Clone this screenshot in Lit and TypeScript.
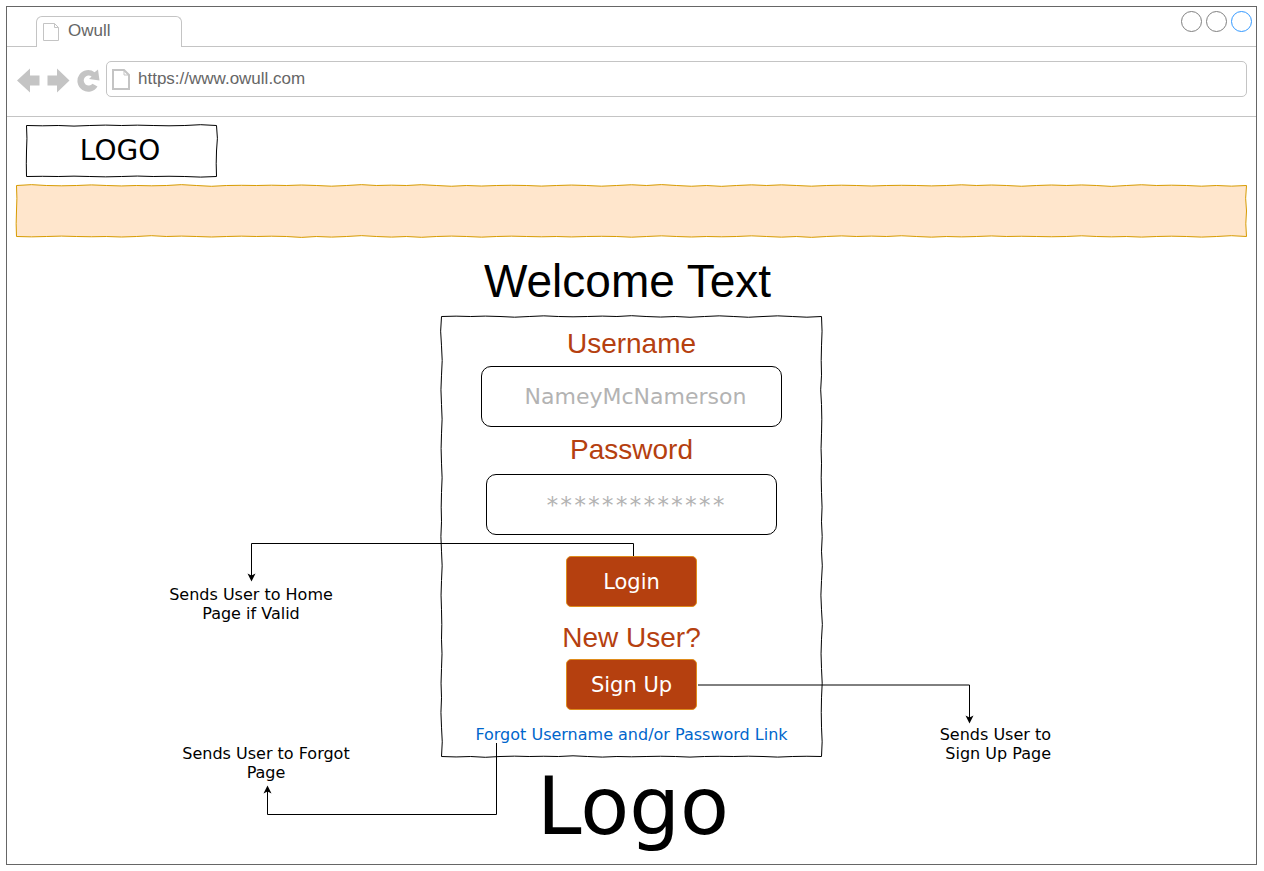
import { LitElement, html, css, svg } from "lit";
import { customElement, property } from "lit/decorators.js";

/** Builds a closed hand-drawn outline for a box of the given size. */
function sketchPath(w: number, h: number, seed: number): string {
  let state = seed * 7919;
  const random = () => {
    state = (state * 16807) % 2147483647;
    return state / 2147483647;
  };
  const corners = [
    [0, 0],
    [w, 0],
    [w, h],
    [0, h],
    [0, 0],
  ];
  let d = "M0 0";
  for (let i = 0; i < 4; i++) {
    const [x0, y0] = corners[i];
    const [x1, y1] = corners[i + 1];
    const length = Math.abs(x1 - x0) + Math.abs(y1 - y0);
    const steps = Math.max(2, Math.round(length / 30));
    const horizontal = y0 === y1;
    let side = random() > 0.5 ? 1 : -1;
    for (let s = 1; s <= steps; s++) {
      const mid = (s - 0.5) / steps;
      const end = s / steps;
      const bend = side * (0.4 + random() * 1.4);
      const cx = x0 + (x1 - x0) * mid + (horizontal ? 0 : bend);
      const cy = y0 + (y1 - y0) * mid + (horizontal ? bend : 0);
      const ex = x0 + (x1 - x0) * end;
      const ey = y0 + (y1 - y0) * end;
      d += `Q${cx.toFixed(1)} ${cy.toFixed(1)} ${ex.toFixed(1)} ${ey.toFixed(1)}`;
      if (random() > 0.3) side = -side;
    }
  }
  return d + "Z";
}

@customElement("sketch-box")
class SketchBox extends LitElement {
  @property({ type: Number }) w = 100;
  @property({ type: Number }) h = 50;
  @property({ type: Number }) seed = 7;

  static styles = css`
    :host {
      display: block;
      position: relative;
    }
    .outline {
      position: absolute;
      inset: 0;
      width: 100%;
      height: 100%;
      overflow: visible;
      pointer-events: none;
    }
    .stroke {
      fill: var(--sketch-fill, none);
      stroke: var(--sketch-stroke, #000);
      stroke-width: 1;
      vector-effect: non-scaling-stroke;
    }
    .content {
      position: relative;
    }
  `;

  render() {
    return html`
      <svg class="outline" viewBox="-0.5 -0.5 ${this.w} ${this.h}" preserveAspectRatio="none" aria-hidden="true">
        <path class="stroke" d=${sketchPath(this.w - 1, this.h - 1, this.seed)}></path>
      </svg>
      <div class="content"><slot></slot></div>
    `;
  }
}

@customElement("browser-chrome")
class BrowserChrome extends LitElement {
  static styles = css`
    :host {
      display: block;
      font-family: "Liberation Sans", Arial, sans-serif;
      font-size: 17px;
      color: #666;
    }
    .tabs {
      display: flex;
      justify-content: space-between;
      align-items: flex-end;
      height: 40px;
      box-shadow: inset 0 -1px #c4c4c4;
    }
    .tab {
      display: flex;
      align-items: center;
      gap: 8px;
      box-sizing: border-box;
      width: 146px;
      height: 31px;
      margin-left: 29px;
      padding: 0 6px 3px;
      border: 1px solid #c4c4c4;
      border-bottom: 0;
      border-radius: 6px 6px 0 0;
      background: #fff;
      font: inherit;
      color: inherit;
    }
    .tab .page-icon {
      margin-top: 3px;
    }
    .window-buttons {
      display: flex;
      gap: 4px;
      align-self: flex-start;
      padding: 4px 4px 0 0;
    }
    .dot {
      box-sizing: border-box;
      width: 21px;
      height: 21px;
      padding: 0;
      border: 1px solid #808080;
      border-radius: 50%;
      background: #fff;
    }
    .dot.active {
      border-color: #3399ff;
    }
    .toolbar {
      display: flex;
      align-items: center;
      padding: 14px 9px 19px 10px;
      border-bottom: 1px solid #c4c4c4;
    }
    .nav {
      display: flex;
      gap: 7px;
      padding: 2px 6px 0 0;
    }
    .nav-button {
      display: block;
      padding: 0;
      border: 0;
      background: none;
    }
    .nav-icon {
      display: block;
      fill: #c4c4c4;
    }
    .address {
      display: flex;
      flex: 1;
      align-items: center;
      gap: 8px;
      box-sizing: border-box;
      height: 36px;
      padding: 0 5px;
      border: 1px solid #c4c4c4;
      border-radius: 5px;
    }
    .url {
      flex: 1;
      min-width: 0;
      padding: 0 0 2px;
      border: 0;
      outline: 0;
      background: none;
      font: inherit;
      color: inherit;
    }
    .page-icon {
      fill: none;
      stroke: #c4c4c4;
    }
  `;

  render() {
    return html`
      <div class="tabs">
        <button class="tab">
          <svg class="page-icon" width="17" height="20" viewBox="0 0 17 20" aria-hidden="true">
            <path d="M.5 1.5H11.5L15.5 5.5V18.5H.5ZM11.5 1.5V5.5H15.5"></path>
          </svg>
          Owull
        </button>
        <div class="window-buttons">
          <button class="dot" aria-label="Minimize"></button>
          <button class="dot" aria-label="Maximize"></button>
          <button class="dot active" aria-label="Close"></button>
        </div>
      </div>
      <div class="toolbar">
        <div class="nav">
          <button class="nav-button" aria-label="Back">
            <svg class="nav-icon" width="23" height="25" viewBox="0 0 23 25">
              <path d="M0 12.5 13 0.5V7.5H22.5V17.5H13V24.5Z"></path>
            </svg>
          </button>
          <button class="nav-button" aria-label="Forward">
            <svg class="nav-icon" width="23" height="25" viewBox="0 0 23 25">
              <path d="M22.5 12.5 10 0.5V7.5H0.5V17.5H10V24.5Z"></path>
            </svg>
          </button>
          <button class="nav-button" aria-label="Reload">
            <svg class="nav-icon" width="23" height="25" viewBox="0 0 23 25">
              <path d="M20.5 18.5A10.8 10.8 0 1 1 17.6 4.2L21 1.5 22.5 12.5 12 11 14.6 8.4A5 5 0 1 0 15.5 15.8Z"></path>
            </svg>
          </button>
        </div>
        <div class="address">
          <svg class="page-icon" width="18" height="21" viewBox="0 0 18 21" stroke-width="2" aria-hidden="true">
            <path d="M1 1H12L17 6V20H1Z"></path>
            <path d="M12 1V6H17" stroke-width="1"></path>
          </svg>
          <input class="url" type="text" aria-label="Address" .value=${"https://www.owull.com"} />
        </div>
      </div>
    `;
  }
}

@customElement("app-root")
class AppRoot extends LitElement {
  static styles = css`
    :host {
      display: flex;
      flex-direction: column;
      box-sizing: border-box;
      min-height: 100vh;
      padding: 6px 7px 6px 6px;
      background: #fff;
      color: #000;
      font-family: "DejaVu Sans", Verdana, sans-serif;
      font-size: 16px;
      line-height: 19px;
    }
    .window {
      flex: 1;
      border: 1px solid #666;
    }
    .page {
      display: flex;
      flex-direction: column;
      padding: 8px 9px 6px;
    }
    .brand {
      width: 191px;
      margin-left: 10px;
      font-size: 28px;
      line-height: 52px;
      text-align: center;
    }
    .brand-text {
      padding-right: 3px;
    }
    .banner {
      height: 52px;
      margin-top: 8px;
      --sketch-fill: #ffe6cc;
      --sketch-stroke: #d79b00;
    }
    .welcome {
      margin: 16px 0 7px;
      padding-right: 8px;
      font: 400 46px/56px "Liberation Sans", Arial, sans-serif;
      text-align: center;
    }
    .card {
      align-self: center;
      width: 381px;
    }
    .form {
      display: flex;
      flex-direction: column;
      align-items: center;
      box-sizing: border-box;
      padding: 11px 0 13px;
    }
    .label {
      font: 28px/34px "Liberation Sans", Arial, sans-serif;
      color: #b5400f;
    }
    .field {
      box-sizing: border-box;
      width: 301px;
      height: 61px;
      margin: 5px 0 6px;
      padding: 0 0 0 8px;
      border: 1px solid #000;
      border-radius: 10px;
      background: #fff;
      font: 22px "DejaVu Sans", Verdana, sans-serif;
      text-align: center;
    }
    .field::placeholder {
      color: #b3b3b3;
      opacity: 1;
    }
    .field.password {
      width: 291px;
      margin: 7px 0 21px;
      font: 23px "DejaVu Sans Mono", monospace;
    }
    .action {
      box-sizing: border-box;
      width: 131px;
      height: 51px;
      margin-bottom: 14px;
      padding: 1px 0 0;
      border: 1px solid #df8c1c;
      border-radius: 5px;
      background: #b5400f;
      color: #fff;
      font: 21px "DejaVu Sans", Verdana, sans-serif;
    }
    .action.signup {
      margin: 4px 0 15px;
    }
    .forgot {
      color: #0066cc;
      text-decoration: none;
    }
    .footer-logo {
      padding-left: 3px;
      font-size: 80px;
      line-height: 100px;
      text-align: center;
    }
    .connectors {
      position: absolute;
      top: 0;
      left: 0;
      width: 382px;
      height: 442px;
      overflow: visible;
      pointer-events: none;
    }
    .line {
      fill: none;
      stroke: #000;
    }
    .note {
      position: absolute;
      margin: 0;
      text-align: center;
    }
    .note.home {
      top: 269px;
      left: -280px;
      width: 180px;
    }
    .note.reset {
      top: 428px;
      left: -265px;
      width: 180px;
    }
    .note.register {
      top: 409px;
      left: 490px;
      width: 120px;
      text-align: right;
    }
  `;

  private arrow(line: string, head: string) {
    return svg`<path class="line" d=${line}></path><path d=${head}></path>`;
  }

  render() {
    return html`
      <div class="window">
        <browser-chrome></browser-chrome>
        <main class="page">
          <sketch-box class="brand" w="191" h="52" seed="11"><div class="brand-text">LOGO</div></sketch-box>
          <sketch-box class="banner" w="1232" h="52" seed="23"></sketch-box>
          <h1 class="welcome">Welcome Text</h1>
          <sketch-box class="card" w="381" h="441" seed="5">
            <form class="form" @submit=${(e: Event) => e.preventDefault()}>
              <label class="label" for="username">Username</label>
              <input class="field" id="username" type="text" placeholder="NameyMcNamerson" />
              <label class="label" for="password">Password</label>
              <input class="field password" id="password" type="password" placeholder="*************" />
              <button class="action" type="submit">Login</button>
              <div class="label">New User?</div>
              <button class="action signup" type="button">Sign Up</button>
              <a class="forgot" href="#forgot">Forgot Username and/or Password Link</a>
            </form>
            <svg class="connectors" viewBox="0 0 382 442" aria-hidden="true">
              ${this.arrow("M192.5 240V227.5H-189.5V260", "M-189.5 265.5L-193.5 257.5L-189.5 259.5L-185.5 257.5Z")}
              ${this.arrow("M257 369H528.5V402", "M528.5 407.5L524.5 399.5L528.5 401.5L532.5 399.5Z")}
              ${this.arrow("M55.5 427V498.5H-173.5V475", "M-173.5 469.5L-177.5 477.5L-173.5 475.5L-169.5 477.5Z")}
            </svg>
            <p class="note home">Sends User to Home<br />Page if Valid</p>
            <p class="note reset">Sends User to Forgot<br />Page</p>
            <p class="note register">Sends User to<br />Sign Up Page</p>
          </sketch-box>
          <div class="footer-logo">Logo</div>
        </main>
      </div>
    `;
  }
}
